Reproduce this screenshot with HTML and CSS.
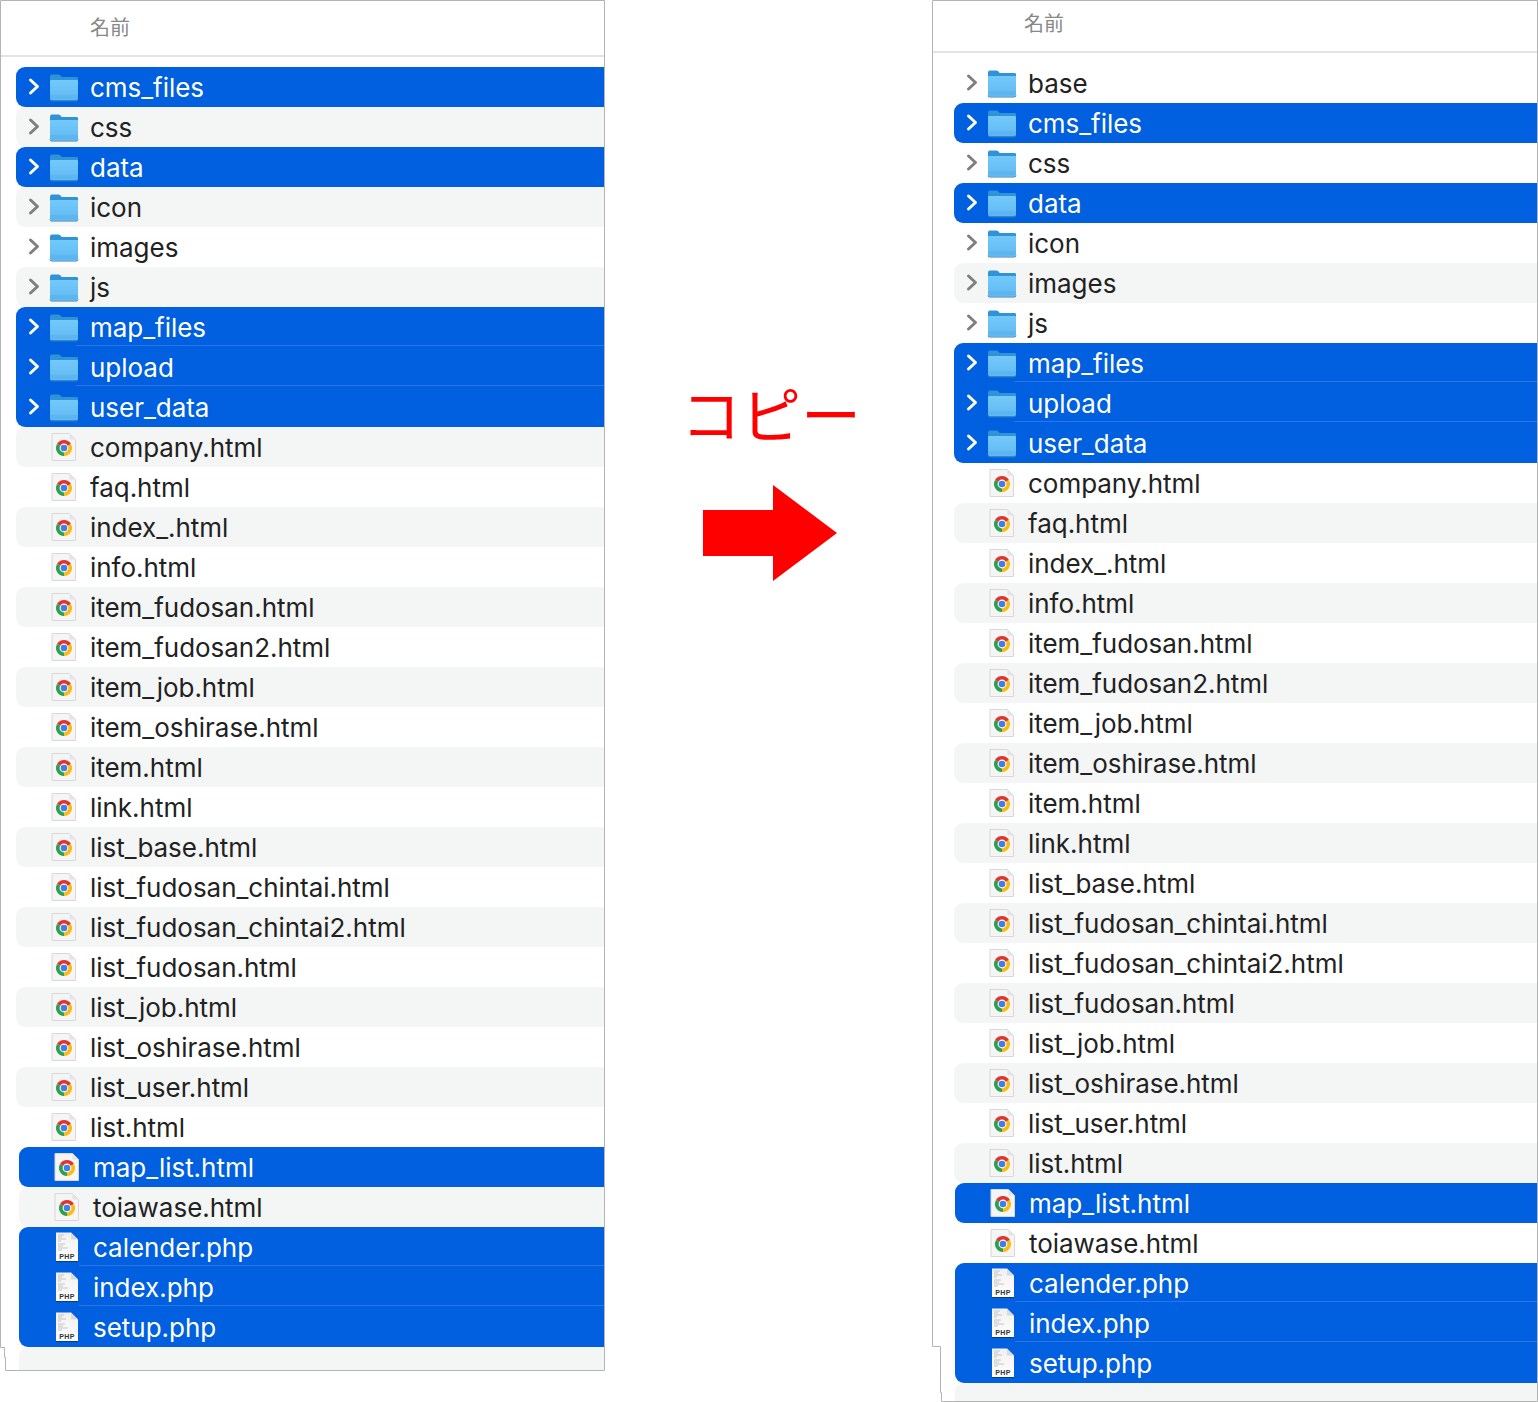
FILE: index.html
```html
<!DOCTYPE html>
<html lang="ja">
<head>
  <meta charset="UTF-8" />
  <title>コピー</title>
  <link rel="stylesheet" href="styles.css">
</head>
<body>
  <svg class="defs" aria-hidden="true">
    <defs>
      <linearGradient id="folderFront" x1="0" y1="0" x2="0" y2="1">
        <stop offset="0" stop-color="#74c9fa"/>
        <stop offset="1" stop-color="#5fb9f3"/>
      </linearGradient>
      <linearGradient id="phpPaper" x1="0" y1="0" x2="0" y2="1">
        <stop offset="0" stop-color="#f0f0f0"/>
        <stop offset="1" stop-color="#ffffff"/>
      </linearGradient>
    </defs>
    <symbol id="chev" viewBox="0 0 32 40">
      <path d="M14.5 13L21.5 19.5L14.5 26" fill="none" stroke="currentColor" stroke-width="3" stroke-linecap="round" stroke-linejoin="round"/>
    </symbol>
    <symbol id="folder" viewBox="0 0 32 40">
      <path d="M2 9.5Q2 7.5 4 7.5H10.5Q12 7.5 13 9L13.5 10H29Q30 10 30 11.5V20H2Z" fill="#2f93d8"/>
      <path d="M2 14Q2 13 3 13H29Q30 13 30 14V31.5Q30 33.5 28 33.5H4Q2 33.5 2 31.5Z" fill="url(#folderFront)"/>
      <path d="M2 29H30M2 31H30" stroke="#52a9e4" stroke-width=".6" fill="none"/>
      <path d="M2 32.5Q2 34 4 34H28Q30 34 30 32.5" stroke="#2c7fc0" stroke-width="1" fill="none"/>
    </symbol>
    <symbol id="chrome" viewBox="0 0 32 40">
      <path d="M4 6.5H21.5L27.5 12.5V33.5H4Z" fill="#f5f5f5" stroke="#d8d8d8"/>
      <path d="M21.5 6.5V12.5H27.5Z" fill="#e4e4e4"/>
      <path d="M16 21L9.07 17A8 8 0 0 1 22.93 17Z" fill="#e0352b"/>
      <path d="M16 21L22.93 17A8 8 0 0 1 16 29Z" fill="#f9bc15"/>
      <path d="M16 21L16 29A8 8 0 0 1 9.07 17Z" fill="#2f9e4f"/>
      <circle cx="16" cy="21" r="4.4" fill="#ffffff"/>
      <circle cx="16" cy="21" r="3.3" fill="#3f7fe8"/>
    </symbol>
    <symbol id="php" viewBox="0 0 32 40">
      <path d="M5 5.5H20L27 12.5V34H5Z" fill="url(#phpPaper)"/>
      <path d="M20 5.5V12.5H27Z" fill="#d9d9d9"/>
      <path d="M7 8H13M7 10H11M7 12H15M7 14H10M7 17H14M7 19H12M7 21H17M7 23H11" stroke="#c4c4c4" stroke-width="1" fill="none"/>
      <path d="M5 34.5H27" stroke="#000" stroke-opacity=".35"/>
    </symbol>
  </svg>

  <section class="panel panel-left">
    <svg class="frame" width="605" height="1371"><path d="M.5 1347.5H4.5V1357.5H5.5V1370.5H604.5V.5H.5Z"/></svg>
    <header class="panel-head">名前</header>
    <ul class="files">
      <li class="row sel"><svg class="chev"><use href="#chev"/></svg><svg class="ico"><use href="#folder"/></svg><span>cms_files</span></li>
      <li class="row alt"><svg class="chev"><use href="#chev"/></svg><svg class="ico"><use href="#folder"/></svg><span>css</span></li>
      <li class="row sel"><svg class="chev"><use href="#chev"/></svg><svg class="ico"><use href="#folder"/></svg><span>data</span></li>
      <li class="row alt"><svg class="chev"><use href="#chev"/></svg><svg class="ico"><use href="#folder"/></svg><span>icon</span></li>
      <li class="row"><svg class="chev"><use href="#chev"/></svg><svg class="ico"><use href="#folder"/></svg><span>images</span></li>
      <li class="row alt"><svg class="chev"><use href="#chev"/></svg><svg class="ico"><use href="#folder"/></svg><span>js</span></li>
      <li class="row sel"><svg class="chev"><use href="#chev"/></svg><svg class="ico"><use href="#folder"/></svg><span>map_files</span></li>
      <li class="row sel"><svg class="chev"><use href="#chev"/></svg><svg class="ico"><use href="#folder"/></svg><span>upload</span></li>
      <li class="row sel"><svg class="chev"><use href="#chev"/></svg><svg class="ico"><use href="#folder"/></svg><span>user_data</span></li>
      <li class="row alt"><span class="nochev"></span><svg class="ico"><use href="#chrome"/></svg><span>company.html</span></li>
      <li class="row"><span class="nochev"></span><svg class="ico"><use href="#chrome"/></svg><span>faq.html</span></li>
      <li class="row alt"><span class="nochev"></span><svg class="ico"><use href="#chrome"/></svg><span>index_.html</span></li>
      <li class="row"><span class="nochev"></span><svg class="ico"><use href="#chrome"/></svg><span>info.html</span></li>
      <li class="row alt"><span class="nochev"></span><svg class="ico"><use href="#chrome"/></svg><span>item_fudosan.html</span></li>
      <li class="row"><span class="nochev"></span><svg class="ico"><use href="#chrome"/></svg><span>item_fudosan2.html</span></li>
      <li class="row alt"><span class="nochev"></span><svg class="ico"><use href="#chrome"/></svg><span>item_job.html</span></li>
      <li class="row"><span class="nochev"></span><svg class="ico"><use href="#chrome"/></svg><span>item_oshirase.html</span></li>
      <li class="row alt"><span class="nochev"></span><svg class="ico"><use href="#chrome"/></svg><span>item.html</span></li>
      <li class="row"><span class="nochev"></span><svg class="ico"><use href="#chrome"/></svg><span>link.html</span></li>
      <li class="row alt"><span class="nochev"></span><svg class="ico"><use href="#chrome"/></svg><span>list_base.html</span></li>
      <li class="row"><span class="nochev"></span><svg class="ico"><use href="#chrome"/></svg><span>list_fudosan_chintai.html</span></li>
      <li class="row alt"><span class="nochev"></span><svg class="ico"><use href="#chrome"/></svg><span>list_fudosan_chintai2.html</span></li>
      <li class="row"><span class="nochev"></span><svg class="ico"><use href="#chrome"/></svg><span>list_fudosan.html</span></li>
      <li class="row alt"><span class="nochev"></span><svg class="ico"><use href="#chrome"/></svg><span>list_job.html</span></li>
      <li class="row"><span class="nochev"></span><svg class="ico"><use href="#chrome"/></svg><span>list_oshirase.html</span></li>
      <li class="row alt"><span class="nochev"></span><svg class="ico"><use href="#chrome"/></svg><span>list_user.html</span></li>
      <li class="row"><span class="nochev"></span><svg class="ico"><use href="#chrome"/></svg><span>list.html</span></li>
    </ul>
    <ul class="files files-low">
      <li class="row sel"><span class="nochev"></span><svg class="ico"><use href="#chrome"/></svg><span>map_list.html</span></li>
      <li class="row alt"><span class="nochev"></span><svg class="ico"><use href="#chrome"/></svg><span>toiawase.html</span></li>
      <li class="row sel"><span class="nochev"></span><svg class="ico"><use href="#php"/><text class="php-label" x="16" y="32">PHP</text></svg><span>calender.php</span></li>
      <li class="row sel"><span class="nochev"></span><svg class="ico"><use href="#php"/><text class="php-label" x="16" y="32">PHP</text></svg><span>index.php</span></li>
      <li class="row sel"><span class="nochev"></span><svg class="ico"><use href="#php"/><text class="php-label" x="16" y="32">PHP</text></svg><span>setup.php</span></li>
      <li class="row alt blank"></li>
    </ul>
  </section>

  <div class="copy-note">
    <p class="copy-label">コピー</p>
    <svg class="copy-arrow" width="134" height="96" viewBox="0 0 134 96"><path d="M0 25H70V0L134 48L70 96V71H0Z"/></svg>
  </div>

  <section class="panel panel-right">
    <svg class="frame" width="606" height="1402"><path d="M.5 1346.5H8.5V1392.5H9.5V1401.5H605.5V.5H.5Z"/></svg>
    <header class="panel-head">名前</header>
    <ul class="files">
      <li class="row"><svg class="chev"><use href="#chev"/></svg><svg class="ico"><use href="#folder"/></svg><span>base</span></li>
      <li class="row sel"><svg class="chev"><use href="#chev"/></svg><svg class="ico"><use href="#folder"/></svg><span>cms_files</span></li>
      <li class="row"><svg class="chev"><use href="#chev"/></svg><svg class="ico"><use href="#folder"/></svg><span>css</span></li>
      <li class="row sel"><svg class="chev"><use href="#chev"/></svg><svg class="ico"><use href="#folder"/></svg><span>data</span></li>
      <li class="row"><svg class="chev"><use href="#chev"/></svg><svg class="ico"><use href="#folder"/></svg><span>icon</span></li>
      <li class="row alt"><svg class="chev"><use href="#chev"/></svg><svg class="ico"><use href="#folder"/></svg><span>images</span></li>
      <li class="row"><svg class="chev"><use href="#chev"/></svg><svg class="ico"><use href="#folder"/></svg><span>js</span></li>
      <li class="row sel"><svg class="chev"><use href="#chev"/></svg><svg class="ico"><use href="#folder"/></svg><span>map_files</span></li>
      <li class="row sel"><svg class="chev"><use href="#chev"/></svg><svg class="ico"><use href="#folder"/></svg><span>upload</span></li>
      <li class="row sel"><svg class="chev"><use href="#chev"/></svg><svg class="ico"><use href="#folder"/></svg><span>user_data</span></li>
      <li class="row"><span class="nochev"></span><svg class="ico"><use href="#chrome"/></svg><span>company.html</span></li>
      <li class="row alt"><span class="nochev"></span><svg class="ico"><use href="#chrome"/></svg><span>faq.html</span></li>
      <li class="row"><span class="nochev"></span><svg class="ico"><use href="#chrome"/></svg><span>index_.html</span></li>
      <li class="row alt"><span class="nochev"></span><svg class="ico"><use href="#chrome"/></svg><span>info.html</span></li>
      <li class="row"><span class="nochev"></span><svg class="ico"><use href="#chrome"/></svg><span>item_fudosan.html</span></li>
      <li class="row alt"><span class="nochev"></span><svg class="ico"><use href="#chrome"/></svg><span>item_fudosan2.html</span></li>
      <li class="row"><span class="nochev"></span><svg class="ico"><use href="#chrome"/></svg><span>item_job.html</span></li>
      <li class="row alt"><span class="nochev"></span><svg class="ico"><use href="#chrome"/></svg><span>item_oshirase.html</span></li>
      <li class="row"><span class="nochev"></span><svg class="ico"><use href="#chrome"/></svg><span>item.html</span></li>
      <li class="row alt"><span class="nochev"></span><svg class="ico"><use href="#chrome"/></svg><span>link.html</span></li>
      <li class="row"><span class="nochev"></span><svg class="ico"><use href="#chrome"/></svg><span>list_base.html</span></li>
      <li class="row alt"><span class="nochev"></span><svg class="ico"><use href="#chrome"/></svg><span>list_fudosan_chintai.html</span></li>
      <li class="row"><span class="nochev"></span><svg class="ico"><use href="#chrome"/></svg><span>list_fudosan_chintai2.html</span></li>
      <li class="row alt"><span class="nochev"></span><svg class="ico"><use href="#chrome"/></svg><span>list_fudosan.html</span></li>
      <li class="row"><span class="nochev"></span><svg class="ico"><use href="#chrome"/></svg><span>list_job.html</span></li>
      <li class="row alt"><span class="nochev"></span><svg class="ico"><use href="#chrome"/></svg><span>list_oshirase.html</span></li>
      <li class="row"><span class="nochev"></span><svg class="ico"><use href="#chrome"/></svg><span>list_user.html</span></li>
      <li class="row alt"><span class="nochev"></span><svg class="ico"><use href="#chrome"/></svg><span>list.html</span></li>
    </ul>
    <ul class="files files-low">
      <li class="row sel"><span class="nochev"></span><svg class="ico"><use href="#chrome"/></svg><span>map_list.html</span></li>
      <li class="row"><span class="nochev"></span><svg class="ico"><use href="#chrome"/></svg><span>toiawase.html</span></li>
      <li class="row sel"><span class="nochev"></span><svg class="ico"><use href="#php"/><text class="php-label" x="16" y="32">PHP</text></svg><span>calender.php</span></li>
      <li class="row sel"><span class="nochev"></span><svg class="ico"><use href="#php"/><text class="php-label" x="16" y="32">PHP</text></svg><span>index.php</span></li>
      <li class="row sel"><span class="nochev"></span><svg class="ico"><use href="#php"/><text class="php-label" x="16" y="32">PHP</text></svg><span>setup.php</span></li>
      <li class="row alt blank"></li>
    </ul>
  </section>
</body>
</html>
```

FILE: styles.css
```css
html, body {
  margin: 0;
  height: 100%;
}
body {
  display: flex;
  align-items: flex-start;
  width: 1538px;
  height: 1402px;
  overflow: hidden;
  background: #fff;
  color: #222;
  font-family: Inter, "Noto Sans CJK JP", sans-serif;
}
/* display:none would kill the gradients the symbols use */
.defs {
  position: absolute;
  width: 0;
  height: 0;
}
.php-label {
  font-family: "Liberation Sans", sans-serif;
  font-size: 7px;
  font-weight: 700;
  letter-spacing: .4px;
  text-anchor: middle;
  fill: #333;
}

/* finder windows */
.panel {
  position: relative;
  flex: none;
}
.panel-left {
  width: 605px;
  height: 1371px;
}
.panel-right {
  width: 606px;
  height: 1402px;
}
.frame {
  position: absolute;
  top: 0;
  left: 0;
  z-index: 2;
  pointer-events: none;
}
.frame path {
  fill: none;
  stroke: #b4b4b4;
  stroke-width: 1;
}
.panel-head {
  box-sizing: border-box;
  padding-left: 90px;
  border-bottom: 2px solid #e3e3e3;
  color: #888;
  font-family: "Noto Sans CJK JP", sans-serif;
  font-size: 20px;
}
.panel-left .panel-head {
  height: 57px;
  line-height: 53px;
}
.panel-right .panel-head {
  height: 53px;
  padding-left: 92px;
  line-height: 45px;
}
.files {
  margin: 0;
  padding: 0;
  list-style: none;
}
.panel-left .files {
  padding-left: 16px;
}
.panel-left .files-low {
  padding-left: 19px;
}
.panel-right .files {
  padding-left: 22px;
}
.panel-right .files-low {
  padding-left: 23px;
}
.files:not(.files-low) {
  margin-top: 10px;
}

/* rows */
.row {
  position: relative;
  display: flex;
  align-items: center;
  height: 40px;
  font-size: 26px;
  letter-spacing: -.03px;
  border-radius: 9px 0 0 9px;
}
.row.alt {
  background: #f4f5f5;
}
.row.sel {
  background: #0060df;
  color: #fff;
}
.row.sel + .row.sel {
  border-top-left-radius: 0;
}
.row.sel:has(+ .row.sel) {
  border-bottom-left-radius: 0;
}
.row.sel:has(+ .row.sel)::after {
  content: "";
  position: absolute;
  left: 60px;
  right: 0;
  bottom: 1px;
  height: 1px;
  background: #2f74e6;
}
.row.blank {
  border-radius: 9px 0 0 0;
}
.panel-left .blank {
  height: 23px;
}
.panel-right .blank {
  height: 18px;
}
.chev,
.nochev {
  flex: none;
  width: 32px;
  height: 40px;
  color: #7f7f7f;
}
.sel .chev {
  color: #fff;
}
.ico {
  flex: none;
  width: 32px;
  height: 40px;
  margin-right: 10px;
}

/* middle note */
.copy-note {
  flex: none;
  box-sizing: border-box;
  width: 327px;
  padding: 372px 0 0 76px;
}
.copy-label {
  margin: 0;
  color: #f00;
  font-family: "Noto Sans CJK JP", sans-serif;
  font-size: 60px;
  line-height: 80px;
  white-space: nowrap;
}
.copy-arrow {
  display: block;
  margin: 33px 0 0 22px;
  fill: #f00;
}
```
